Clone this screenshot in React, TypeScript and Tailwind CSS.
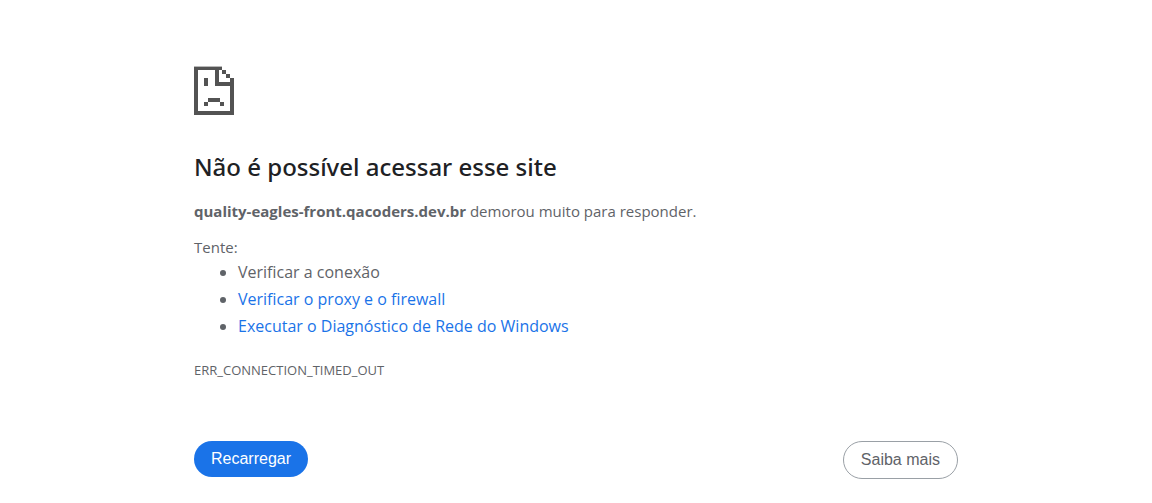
export default function App() {
  return (
    <main className="min-h-screen bg-white px-6 font-['Open_Sans','Noto_Sans',sans-serif] text-base text-[#5f6368]">
      <div className="mx-auto max-w-[764px] pt-[66px] pb-6">
        <svg className="h-[49px] w-10" viewBox="0 0 40 49" shapeRendering="crispEdges" role="img" aria-label="Erro">
          <path fill="#b9b9b9" d="M0 0h28v1H0z" />
          <path
            fill="#535353"
            d="M0 1h28v3H4v41h32V20H21V4h4v12h11v-4h4v37H0zM28 4h4v4h-4zM32 8h4v4h-4zM10 12h4v8h-4zM14 32h12v4H14zM10 36h4v4h-4zM26 36h4v4h-4z"
          />
        </svg>
        <h1 className="mt-9 font-['Noto_Sans','Open_Sans',sans-serif] text-2xl font-medium leading-8 text-[#202124]">
          Não é possível acessar esse site
        </h1>
        <p className="mt-4 text-[15px] leading-6">
          <strong className="font-bold">quality-eagles-front.qacoders.dev.br</strong> demorou muito para responder.
        </p>
        <p className="mt-3 text-[15px] leading-6">Tente:</p>
        <ul className="list-disc pl-11 leading-[27px]">
          <li>Verificar a conexão</li>
          <li><a href="#proxy" className="text-[#1a73e8]">Verificar o proxy e o firewall</a></li>
          <li><a href="#diagnostico" className="text-[#1a73e8]">Executar o Diagnóstico de Rede do Windows</a></li>
        </ul>
        <p className="mt-5 text-[13px] leading-5">ERR_CONNECTION_TIMED_OUT</p>
        <div className="mt-[61px] flex items-start justify-between font-['Liberation_Sans',sans-serif]">
          <button type="button" className="h-9 rounded-full bg-[#1a73e8] px-[17px] text-white">Recarregar</button>
          <button type="button" className="h-[38px] rounded-full border border-[#9aa0a6] px-[17px]">Saiba mais</button>
        </div>
      </div>
    </main>
  );
}
